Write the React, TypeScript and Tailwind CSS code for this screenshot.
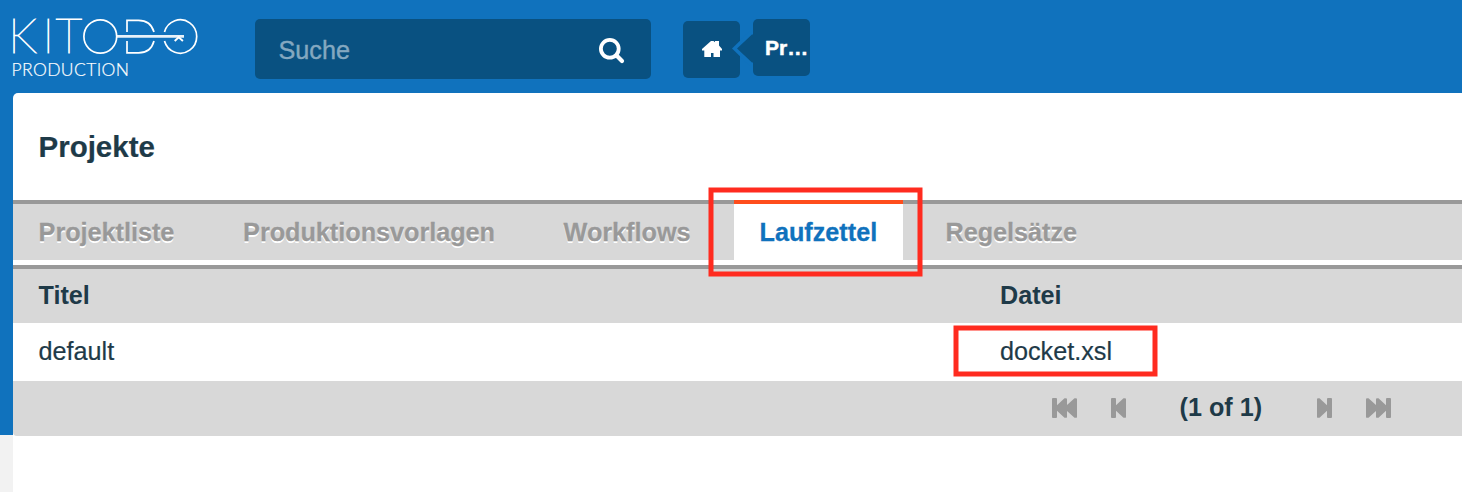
import React from "react";

function Logo() {
  return (
    <svg width="200" height="93" viewBox="5 0 200 93" className="block" fill="none" stroke="#fff" strokeWidth="1.7">
      <g fill="#fff" fontFamily="Lato, sans-serif">
        <g fontSize="47" fontWeight="100" strokeWidth="0.9">
          <text x="8.200" y="53.200">K</text>
          <text x="42.500" y="53.200">I</text>
          <text x="55.500" y="53.200">T</text>
        </g>
        <text x="11.500" y="75.500" fontSize="17.500" fontWeight="300" strokeWidth="0.200" textLength="117.500">PRODUCTION</text>
      </g>
      <ellipse cx="100.300" cy="36.500" rx="16.400" ry="16.700" />
      <path d="M127 32V20.300h11.500c8 0 13.500 4.500 15.500 11.700M127 41v11.900h11.500c8 0 13.500-4.500 15.500-11.900" />
      <path d="M164.500 32a16.400 16.700 0 1 1 0 9" />
      <path d="M117 36.400h67" strokeWidth="2.600" strokeOpacity="0.900" />
      <path d="M174.700 41l4-3.800 4.200 3.800" strokeWidth="1.900" />
    </svg>
  );
}

function SearchIcon() {
  return (
    <svg width="26" height="26" viewBox="0 0 26 26" fill="none" stroke="#fff" className="mt-1 block">
      <circle cx="10.800" cy="10.800" r="8.900" strokeWidth="3.800" />
      <path d="M17.300 17.300l5.700 5.700" strokeWidth="4.200" strokeLinecap="round" />
    </svg>
  );
}

function HomeIcon() {
  return (
    <svg width="20" height="16" viewBox="0 0 20 16" fill="#fff" className="mb-[2px] block">
      <path d="M0 8 9 0H11.500L13 1.300V0H17V4.500L20 8V9.500H18V16H11.500V12H9V16H2.300V9.500H0Z" />
    </svg>
  );
}

function SeekIcon({ double = false, flip = false }: { double?: boolean; flip?: boolean }) {
  const width = double ? 25 : 15;
  return (
    <svg width={width} height="20" viewBox={`0 0 ${width} 20`} fill="#999" className={flip ? "block -scale-x-100" : "block"}>
      <rect width="5" height="20" rx="1" />
      <path d={double ? "M2 10 12.500 .200Q15 0 15 .700V7L22.500 .200Q25 0 25 .700V19.300Q25 20 22.500 19.800L15 13V19.300Q15 20 12.500 19.800Z" : "M2 10 12.500 .200Q15 0 15 .700V19.300Q15 20 12.500 19.800Z"} />
    </svg>
  );
}

const tabBase = "h-[60px] border-t-4 px-[25.600px] leading-[56px] font-bold whitespace-nowrap";
const tabIdle = "border-[#999] text-[#999] [text-shadow:0_2px_0_#fff] [-webkit-text-stroke:0.300px_#999]";

export default function App() {
  return (
    <div className="h-[492px] w-[1462px] overflow-hidden bg-white font-['Liberation_Sans',Arial,sans-serif] text-[25.200px] text-[#1e3a48]">
      <header className="flex h-[93px] items-start bg-[#1072bd]">
        <div className="ml-[5px] w-[200px]"><Logo /></div>
        <div className="ml-[50px] mt-[19px] flex h-[60px] w-[396px] items-center justify-between rounded-[5px] bg-[#095181] pl-[23.500px] pr-[26px]">
          <span className="pt-[2px] leading-[60px] text-[#84a8c0] [-webkit-text-stroke:0.400px_#84a8c0]">Suche</span>
          <SearchIcon />
        </div>
        <nav className="ml-8 flex items-start">
          <a className="mt-[21px] flex h-[57px] w-[57px] items-center justify-center rounded-[5px] bg-[#095181]"><HomeIcon /></a>
          <a className="relative ml-[13px] mt-[19px] h-[57px] w-[57px] rounded-[5px] bg-[#095181] pl-3 text-[21px] leading-[57px] font-bold whitespace-nowrap text-white [-webkit-text-stroke:0.500px_#fff]">
            <svg width="22" height="36" viewBox="0 0 22 36" className="absolute -left-[21px] top-3">
              <path d="M0 17.500 17.500 .500 21 4V31L17.500 34.500Z" fill="#1072bd" />
              <path d="M5 17.500 20 3.500V31.500Z" fill="#095181" />
              <path d="M20 3.500h2v28h-2Z" fill="#095181" />
            </svg>
            Pr…
          </a>
        </nav>
      </header>
      <div className="flex h-[399px]">
        <div className="w-[13px] shrink-0 bg-[#f2f2f2]"><div className="h-[342px] bg-[#1072bd]" /></div>
        <div className="min-w-0 flex-1 bg-[linear-gradient(#1072bd_20px,transparent_20px)]">
          <main className="h-full rounded-tl-[5px] bg-white">
            <h1 className="h-[107px] pl-[25.500px] text-[29.500px] leading-[107px] font-bold [-webkit-text-stroke:0.200px_#1e3a48]">Projekte</h1>
            <div className="relative flex h-[60px] bg-[#d8d8d8]">
              <div className={`${tabBase} ${tabIdle} w-[204.500px]`}>Projektliste</div>
              <div className={`${tabBase} ${tabIdle} w-[320.500px]`}>Produktionsvorlagen</div>
              <div className={`${tabBase} ${tabIdle} w-[196px]`}>Workflows</div>
              <div className={`${tabBase} w-[169px] border-[#ff4d1c] bg-white text-[#1072bd] [-webkit-text-stroke:0.300px_#1072bd]`}>Laufzettel</div>
              <div className={`${tabBase} ${tabIdle} flex-1 pl-[42.500px]`}>Regelsätze</div>
              <div className="absolute -top-[12px] left-[696px] h-[88px] w-[213px] border-[4px] border-[#ff2b1f] shadow-[0_0_0_0.500px_#ff2b1f,inset_0_0_0_0.500px_#ff2b1f]" />
            </div>
            <div className="mt-[5px] flex h-[58px] border-t-4 border-[#999] bg-[#d8d8d8] leading-[53px] font-bold">
              <div className="w-[961.500px] pl-[25.500px]">Titel</div>
              <div className="pl-[25.500px]">Datei</div>
            </div>
            <div className="flex h-[58px] bg-white leading-[57px]">
              <div className="w-[961.500px] pl-[25.500px] [-webkit-text-stroke:0.200px_#1e3a48]">default</div>
              <div className="relative pl-[25.500px] [-webkit-text-stroke:0.200px_#1e3a48]">
                docket.xsl
                <div className="absolute left-[-20.500px] top-[3px] h-[50px] w-[203px] border-[4px] border-[#ff2b1f] shadow-[0_0_0_0.500px_#ff2b1f,inset_0_0_0_0.500px_#ff2b1f]" />
              </div>
            </div>
            <div className="flex h-[55px] rounded-bl-[4px] bg-[#d8d8d8] pl-[1039px] leading-[53px]">
              <div className="mt-[17px] w-[59px]"><SeekIcon double /></div>
              <div className="mt-[17px] w-[68.500px]"><SeekIcon /></div>
              <span className="w-[137.500px] font-bold whitespace-nowrap">(1 of 1)</span>
              <div className="mt-[17px] w-[49px]"><SeekIcon flip /></div>
              <div className="mt-[17px]"><SeekIcon double flip /></div>
            </div>
          </main>
        </div>
      </div>
    </div>
  );
}
